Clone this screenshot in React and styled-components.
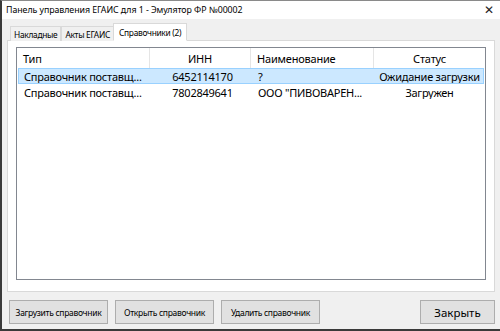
import styled, { createGlobalStyle } from 'styled-components';

const GlobalStyle = createGlobalStyle`
  html, body {
    margin: 0;
    padding: 0;
    background: #f0f0f0;
  }
  * {
    box-sizing: border-box;
  }
`;

const Window = styled.div`
  width: 500px;
  height: 331px;
  display: flex;
  flex-direction: column;
  background: #f0f0f0;
  border-left: 2px solid #3a3a3a;
  border-bottom: 2px solid #3a3a3a;
  border-top: 1px solid #8a8a8a;
  font-family: "Noto Sans", "Open Sans", sans-serif;
  color: #000;
  overflow: hidden;
`;

const TitleBar = styled.div`
  height: 18px;
  flex: none;
  display: flex;
  align-items: center;
  justify-content: space-between;
  background: #fff;
  padding: 0 6px 0 4px;
  font-size: 8.8px;
  letter-spacing: -0.05px;
`;

const CloseGlyph = styled.span`
  font-size: 12px;
  color: #222;
  line-height: 1;
`;

const Body = styled.div`
  flex: 1;
  display: flex;
  flex-direction: column;
  padding: 4px 5px 5px 5px;
  min-height: 0;
`;

const TabStrip = styled.div`
  display: flex;
  align-items: flex-end;
  padding-left: 3px;
  height: 18px;
  flex: none;
  position: relative;
  z-index: 1;
`;

const Tab = styled.div`
  height: ${(p) => (p.$active ? '18px' : '15px')};
  padding: 0 ${(p) => (p.$active ? '5px' : '3px')};
  display: flex;
  align-items: center;
  font-size: 8.4px;
  letter-spacing: -0.3px;
  background: ${(p) => (p.$active ? '#fff' : '#f0f0f0')};
  border: 1px solid #d9d9d9;
  border-bottom: ${(p) => (p.$active ? '1px solid #fff' : 'none')};
  margin-left: ${(p) => (p.$active ? '-1px' : '0')};
  & + & {
    border-left: ${(p) => (p.$active ? '1px solid #d9d9d9' : 'none')};
  }
`;

const TabPanel = styled.div`
  flex: 1;
  margin-top: -1px;
  background: #fff;
  border: 1px solid #d9d9d9;
  padding: 6px 8px 11px 8px;
  display: flex;
  min-height: 0;
`;

const Grid = styled.div`
  flex: 1;
  border: 1px solid #828790;
  background: #fff;
  display: flex;
  flex-direction: column;
`;

const cols = '133px 101px 123px 1fr';

const HeaderRow = styled.div`
  display: grid;
  grid-template-columns: ${cols};
  height: 20px;
  font-size: 11px;
  letter-spacing: -0.2px;
`;

const HeaderCell = styled.div`
  display: flex;
  align-items: center;
  justify-content: ${(p) => (p.$center ? 'center' : 'flex-start')};
  padding-left: ${(p) => (p.$center ? '0' : '6px')};
  border-right: 1px solid #e5e5e5;
  &:last-child {
    border-right: none;
  }
`;

const Row = styled.div`
  display: grid;
  grid-template-columns: ${cols};
  height: 16px;
  margin: 0 1px;
  font-size: 11px;
  letter-spacing: -0.25px;
  background: ${(p) => (p.$selected ? '#cce8ff' : 'transparent')};
  border: 1px solid ${(p) => (p.$selected ? '#99d1ff' : 'transparent')};
`;

const Cell = styled.div`
  display: flex;
  align-items: center;
  justify-content: ${(p) => (p.$center ? 'center' : 'flex-start')};
  padding-left: ${(p) => (p.$center ? '0' : '5px')};
  white-space: nowrap;
  overflow: hidden;
`;

const ButtonBar = styled.div`
  display: flex;
  align-items: center;
  gap: 7px;
  margin-top: 8px;
  padding-left: 2px;
  flex: none;
`;

const Button = styled.button`
  height: 24px;
  width: ${(p) => p.$width || '99px'};
  margin-left: ${(p) => (p.$push ? 'auto' : '0')};
  background: #e1e1e1;
  border: 1px solid #adadad;
  font-family: "Noto Sans", "Open Sans", sans-serif;
  font-size: ${(p) => (p.$big ? '11.5px' : '8.5px')};
  letter-spacing: ${(p) => (p.$big ? '0' : '-0.3px')};
  color: #000;
  padding: 0;
  cursor: pointer;
`;

const rows = [
  { type: 'Справочник поставщ...', inn: '6452114170', name: '?', status: 'Ожидание загрузки' },
  { type: 'Справочник поставщ...', inn: '7802849641', name: 'ООО "ПИВОВАРЕН...', status: 'Загружен' },
];

export default function App() {
  return (
    <>
      <GlobalStyle />
      <Window>
        <TitleBar>
          <span>Панель управления ЕГАИС для 1 - Эмулятор ФР №00002</span>
          <CloseGlyph>✕</CloseGlyph>
        </TitleBar>
        <Body>
          <TabStrip>
            <Tab>Накладные</Tab>
            <Tab>Акты ЕГАИС</Tab>
            <Tab $active>Справочники (2)</Tab>
          </TabStrip>
          <TabPanel>
            <Grid>
              <HeaderRow>
                <HeaderCell>Тип</HeaderCell>
                <HeaderCell $center>ИНН</HeaderCell>
                <HeaderCell>Наименование</HeaderCell>
                <HeaderCell $center>Статус</HeaderCell>
              </HeaderRow>
              {rows.map((r, i) => (
                <Row key={i} $selected={i === 0}>
                  <Cell>{r.type}</Cell>
                  <Cell $center>{r.inn}</Cell>
                  <Cell>{r.name}</Cell>
                  <Cell $center>{r.status}</Cell>
                </Row>
              ))}
            </Grid>
          </TabPanel>
          <ButtonBar>
            <Button>Загрузить справочник</Button>
            <Button>Открыть справочник</Button>
            <Button>Удалить справочник</Button>
            <Button $push $big $width="75px">Закрыть</Button>
          </ButtonBar>
        </Body>
      </Window>
    </>
  );
}
